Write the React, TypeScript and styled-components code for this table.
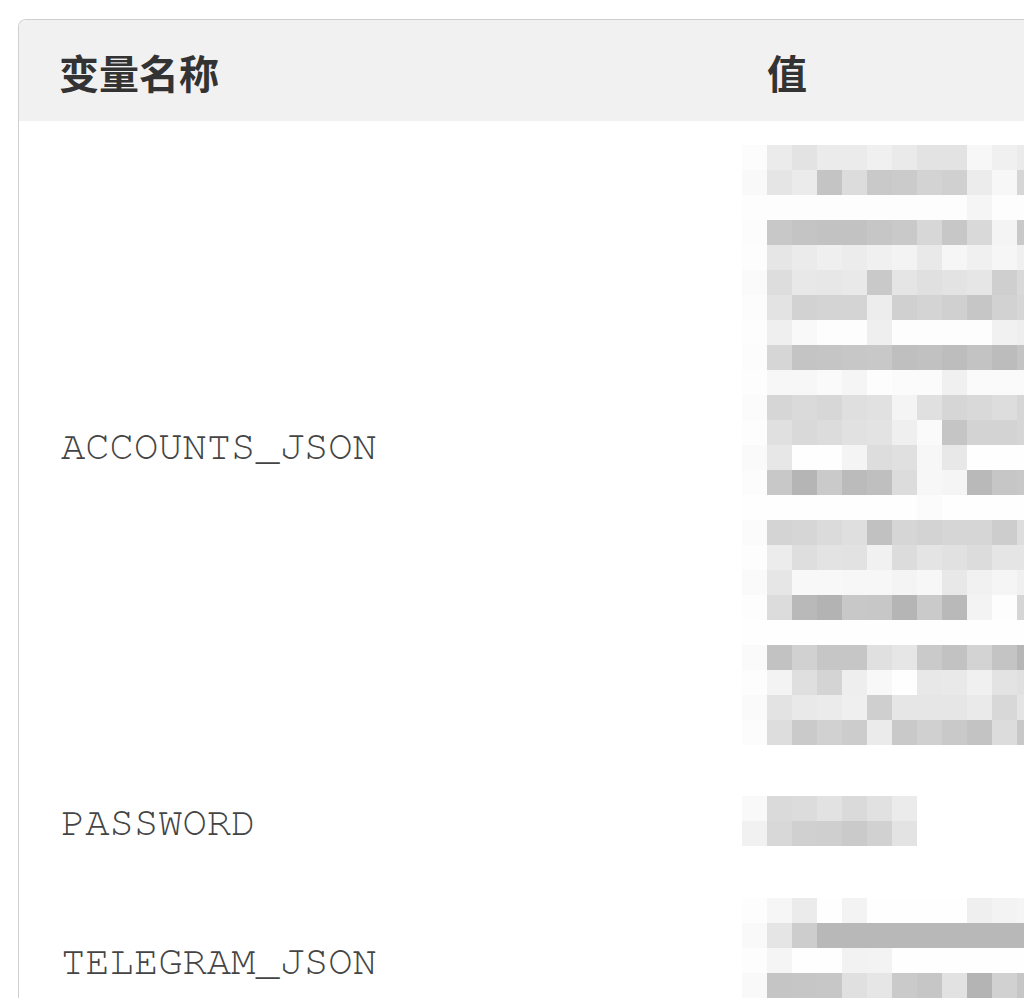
import React from "react";
import styled, { createGlobalStyle } from "styled-components";

const GlobalStyle = createGlobalStyle`
  html, body {
    margin: 0;
    padding: 0;
    background: #fff;
    overflow: hidden;
  }
`;

// pixelated (censored) values, one gray level per 25px block
const CELL = 25;

const ACCOUNTS: number[][] = [
  [252, 235, 227, 235, 235, 240, 234, 227, 227, 247, 240, 235],
  [249, 229, 235, 196, 220, 201, 203, 211, 208, 236, 247, 214],
  [253, 253, 253, 253, 253, 253, 253, 253, 253, 245, 253, 253],
  [252, 200, 196, 194, 194, 198, 201, 215, 199, 217, 244, 201],
  [253, 230, 235, 239, 236, 240, 243, 233, 246, 240, 246, 240],
  [250, 221, 232, 231, 233, 201, 229, 224, 227, 230, 207, 217],
  [252, 227, 210, 212, 212, 237, 208, 212, 208, 198, 210, 214],
  [253, 239, 249, 253, 253, 239, 253, 253, 253, 253, 241, 238],
  [252, 214, 196, 197, 199, 200, 191, 193, 189, 195, 188, 196],
  [253, 247, 247, 250, 245, 253, 251, 251, 240, 250, 250, 250],
  [251, 214, 218, 215, 223, 225, 244, 224, 214, 217, 221, 214],
  [253, 224, 217, 220, 225, 227, 239, 250, 197, 211, 211, 214],
  [250, 231, 254, 254, 244, 221, 224, 247, 232, 254, 254, 254],
  [252, 200, 181, 202, 187, 191, 220, 247, 245, 185, 198, 200],
  [254, 254, 254, 254, 254, 254, 254, 251, 254, 254, 254, 254],
  [251, 212, 214, 219, 223, 193, 214, 211, 214, 214, 205, 221],
  [253, 236, 222, 227, 226, 241, 220, 228, 225, 220, 229, 229],
  [250, 230, 248, 248, 247, 247, 244, 247, 232, 241, 245, 240],
  [253, 220, 185, 179, 200, 199, 181, 202, 185, 243, 253, 214],
  [254, 254, 254, 254, 254, 254, 254, 254, 254, 254, 254, 254],
  [250, 194, 209, 198, 198, 224, 230, 202, 194, 211, 196, 182],
  [253, 243, 223, 212, 238, 248, 254, 232, 233, 240, 227, 224],
  [250, 227, 233, 235, 239, 207, 230, 230, 230, 234, 216, 228],
  [252, 221, 202, 209, 204, 235, 201, 208, 201, 195, 220, 200],
];

const PASSWORD: number[][] = [
  [249, 218, 220, 226, 218, 225, 235],
  [241, 216, 208, 207, 202, 209, 227],
];

const TELEGRAM: number[][] = [
  [253, 246, 235, 254, 243, 254, 254, 254, 254, 239, 243, 245],
  [249, 229, 205, 184, 184, 184, 184, 184, 184, 184, 184, 184],
  [253, 245, 254, 254, 242, 243, 254, 254, 254, 254, 254, 254],
  [249, 197, 198, 199, 224, 230, 202, 198, 226, 180, 209, 198],
  [252, 230, 222, 235, 214, 240, 226, 218, 236, 228, 221, 232],
];

const rows = [
  { name: "ACCOUNTS_JSON", value: ACCOUNTS },
  { name: "PASSWORD", value: PASSWORD },
  { name: "TELEGRAM_JSON", value: TELEGRAM },
];

const Mosaic: React.FC<{ data: number[][] }> = ({ data }) => {
  const cols = data[0].length;
  return (
    <MosaicSvg width={cols * CELL} height={data.length * CELL}>
      {data.map((row, y) =>
        row.map((g, x) => (
          <rect
            key={`${x}-${y}`}
            x={x * CELL}
            y={y * CELL}
            width={CELL}
            height={CELL}
            fill={`rgb(${g},${g},${g})`}
          />
        ))
      )}
    </MosaicSvg>
  );
};

export default function App() {
  return (
    <>
      <GlobalStyle />
      <Page>
        <Table>
          <HeadRow>
            <HeadCell>变量名称</HeadCell>
            <HeadCell>值</HeadCell>
          </HeadRow>
          {rows.map((r) => (
            <BodyRow key={r.name}>
              <NameCell>{r.name}</NameCell>
              <ValueCell>
                <Mosaic data={r.value} />
              </ValueCell>
            </BodyRow>
          ))}
        </Table>
      </Page>
    </>
  );
}

const Page = styled.div`
  padding: 19px 0 0 18px;
`;

const Table = styled.div`
  width: 1200px;
  border: 1px solid #cfcfcf;
  border-bottom: none;
  border-radius: 8px 8px 0 0;
  overflow: hidden;
`;

const HeadRow = styled.div`
  display: grid;
  grid-template-columns: 708px 1fr;
  align-items: center;
  height: 101px;
  background: #f1f1f1;
`;

const HeadCell = styled.div`
  padding: 2px 0 0 40px;
  font-family: "Noto Sans CJK SC", "Noto Sans", sans-serif;
  font-weight: 700;
  font-size: 40px;
  line-height: 1;
  color: #333;
`;

const BodyRow = styled.div`
  display: grid;
  grid-template-columns: 708px 1fr;
  align-items: center;
  padding: 24px 0 26px;
  background: #fff;
`;

const NameCell = styled.div`
  padding: 4px 0 0 42px;
  font-family: "Nimbus Mono PS", "FreeMono", "Courier New", "Liberation Mono", monospace;
  font-size: 40.5px;
  line-height: 1.2;
  color: #444;
`;

const ValueCell = styled.div`
  padding-left: 40px;
`;

const MosaicSvg = styled.svg`
  display: block;
  margin-left: -25px;
`;
